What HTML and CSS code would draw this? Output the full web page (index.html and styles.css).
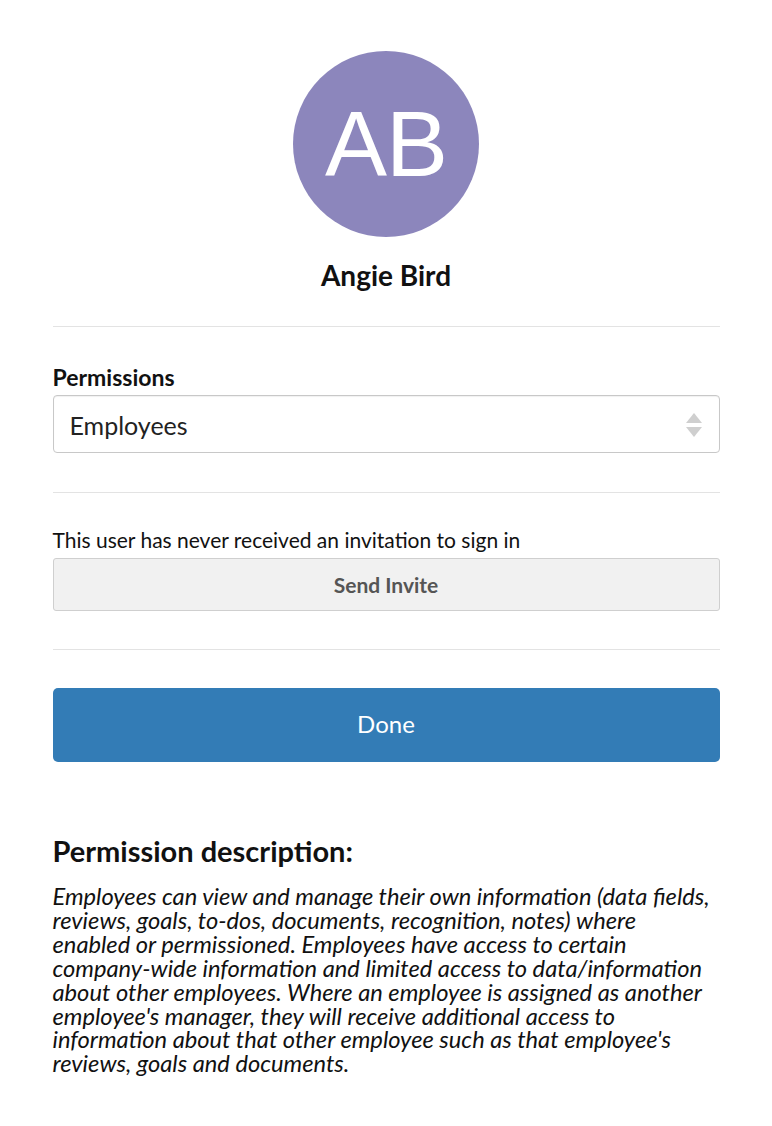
FILE: index.html
```html
<!DOCTYPE html>
<html>
<head>
<meta charset="utf-8">
<link rel="stylesheet" href="styles.css">
</head>
<body>
<div class="panel">
  <div class="profile">
    <div class="avatar">AB</div>
    <div class="name">Angie Bird</div>
  </div>
  <hr class="divider">
  <div class="field">
    <label class="label">Permissions</label>
    <div class="select">
      <span>Employees</span>
      <svg class="arrows" width="18" height="26" viewBox="0 0 18 26">
        <path d="M9 1 L17 11 L1 11 Z" fill="#cfcfcf"/>
        <path d="M1 15 L17 15 L9 25 Z" fill="#cfcfcf"/>
      </svg>
    </div>
  </div>
  <hr class="divider">
  <div class="invite">
    <p class="invite-text">This user has never received an invitation to sign in</p>
    <button class="btn-secondary">Send Invite</button>
  </div>
  <hr class="divider">
  <button class="btn-primary">Done</button>
  <div class="desc">
    <h2 class="desc-title">Permission description:</h2>
    <p class="desc-text">Employees can view and manage their own information (data fields, reviews, goals, to-dos, documents, recognition, notes) where enabled or permissioned. Employees have access to certain company-wide information and limited access to data/information about other employees. Where an employee is assigned as another employee's manager, they will receive additional access to information about that other employee such as that employee's reviews, goals and documents.</p>
  </div>
</div>
</body>
</html>
```

FILE: styles.css
```css
html, body {
  margin: 0;
  padding: 0;
  background: #fff;
}
body {
  font-family: Lato, "Open Sans", sans-serif;
  color: #111;
}
.panel {
  width: 667px;
  margin: 0 auto;
  padding: 51px 0 40px;
  display: flex;
  flex-direction: column;
}
.profile {
  display: flex;
  flex-direction: column;
  align-items: center;
}
.avatar {
  width: 186px;
  height: 186px;
  border-radius: 50%;
  background: #8c86bc;
  color: #fff;
  font-family: "Liberation Sans", Arial, sans-serif;
  font-size: 93px;
  display: flex;
  align-items: center;
  justify-content: center;
  letter-spacing: -1px;
}
.name {
  margin-top: 21px;
  font-size: 28px;
  font-weight: 700;
  line-height: 34px;
  color: #111;
}
.divider {
  border: 0;
  border-top: 1px solid #e3e3e3;
  margin: 34px 0 0;
  width: 100%;
}
.field {
  margin-top: 36px;
  display: flex;
  flex-direction: column;
}
.label {
  font-size: 23px;
  font-weight: 700;
  line-height: 28px;
  margin-bottom: 4px;
}
.select {
  height: 58px;
  box-sizing: border-box;
  border: 1px solid #c8c8c8;
  border-radius: 4px;
  box-shadow: inset 0 1px 1px rgba(0,0,0,0.06);
  display: flex;
  align-items: center;
  justify-content: space-between;
  padding: 2px 16px 0 16px;
  font-size: 25px;
  color: #222;
}
.field + .divider { margin-top: 39px; }
.invite {
  margin-top: 34px;
  display: flex;
  flex-direction: column;
}
.invite-text {
  margin: 0 0 5px;
  font-size: 21px;
  line-height: 26px;
}
.btn-secondary {
  height: 53px;
  border: 1px solid #cfcfcf;
  border-radius: 3px;
  background: #f1f1f1;
  font-family: inherit;
  font-size: 21px;
  font-weight: 700;
  color: #555;
  padding-bottom: 2px;
}
.invite + .divider { margin-top: 38px; }
.btn-primary {
  margin-top: 38px;
  height: 74px;
  border: 0;
  border-radius: 5px;
  background: #337cb6;
  color: #fff;
  font-family: inherit;
  font-size: 24px;
  padding-bottom: 4px;
}
.desc {
  margin-top: 72px;
}
.desc-title {
  margin: 0 0 17px;
  font-size: 29px;
  font-weight: 700;
  line-height: 34px;
}
.desc-text {
  margin: 0;
  max-width: 664px;
  font-size: 23.7px;
  font-style: italic;
  line-height: 23.9px;
}
```
